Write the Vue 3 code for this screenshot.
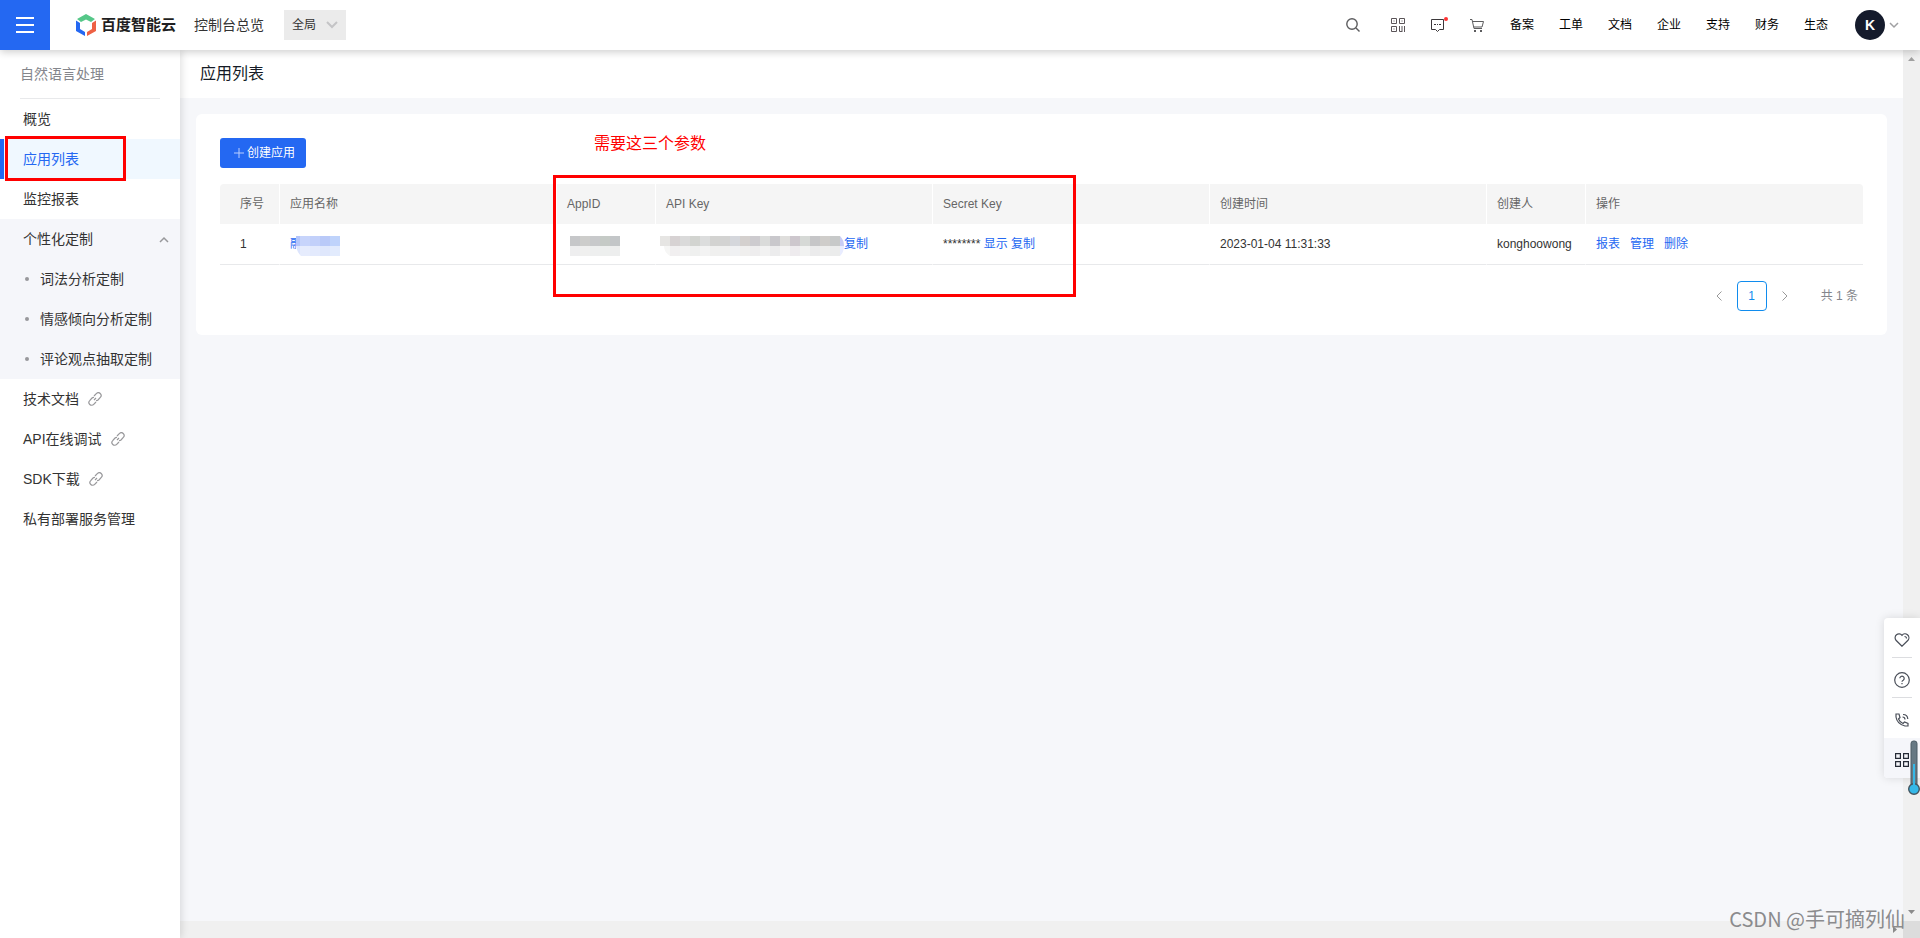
<script setup>
import { ref } from 'vue'

const scope = ref('全局')
const topLinks = ['备案', '工单', '文档', '企业', '支持', '财务', '生态']
const subItems = ['词法分析定制', '情感倾向分析定制', '评论观点抽取定制']
const docItems = ['技术文档', 'API在线调试', 'SDK下载']
const appIdTiles = ['#c6c7c9', '#cdcdcb', '#c8c9cb', '#c5cac6', '#c3c6c8']
const apiKeyTiles = [
  '#e6e5e3', '#d7d2d3', '#dadada', '#d2d4d0', '#dcdddd', '#d3d3d1', '#d3d3d2', '#d5d7dc', '#d4d0ce',
  '#cdcbcf', '#dadbda', '#c9c8cc', '#dfdedc', '#cdc7cd', '#d6d9d6', '#c6c6c8', '#cfcdca', '#c7c9c9',
]
const nameTiles = ['#b4c5fb', '#c7d4fb', '#c2d0fa', '#b9c9f8', '#bfd3fb']
</script>

<template>
  <div class="console">
    <header class="topbar">
      <button class="menu-btn" aria-label="菜单">
        <svg width="18" height="18" viewBox="0 0 18 18"><path d="M0 2h18M0 9h18M0 16h18" stroke="#fff" stroke-width="2" /></svg>
      </button>
      <a class="brand" href="#">
        <svg width="20" height="22" viewBox="0 0 20 22">
          <path d="M10 0 19 5 15 8 10 5.500 5 8 1 5Z" fill="#55c788" />
          <path d="M0 6.500 4 9v6l5 3v4L0 17Z" fill="#2468f2" />
          <path d="M20 6.500 16 9v6l-5 3v4l9-5Z" fill="#ee6144" />
        </svg>
        <span>百度智能云</span>
      </a>
      <a class="overview" href="#">控制台总览</a>
      <div class="scope">
        <select v-model="scope" aria-label="区域"><option>全局</option></select>
        <svg width="12" height="8" viewBox="0 0 12 8"><path d="m1 1 5 5 5-5" fill="none" stroke="#c4c4c6" stroke-width="2" /></svg>
      </div>
      <div class="tools">
        <button class="tool search" aria-label="搜索">
          <svg width="14" height="14" viewBox="0 0 14 14" fill="none" stroke="#5c5c5e" stroke-width="1.400"><circle cx="6" cy="6" r="5.200" /><path d="m10 10 3.500 3.500" /></svg>
        </button>
        <button class="tool grid" aria-label="二维码">
          <svg width="14" height="14" viewBox="0 0 14 14" fill="none" stroke="#5a5458">
            <path d="M.5.5h5v5h-5zM8.500.5h5v5h-5zM.5 8.500h5v5h-5zM8.500 8v5.500H11M11 8v6M13.500 8v6M2.500 3h1M10.500 3h1M2.500 11h1" />
          </svg>
        </button>
        <button class="tool msg" aria-label="消息">
          <svg width="17" height="16" viewBox="0 0 17 16">
            <path d="M.5 2.500h12v10H8.500l-2 2-2-2h-4Z" fill="none" stroke="#3c383b" />
            <path d="M3 7.500h2M6 7.500h1M8 7.500h2" stroke="#3c383b" />
            <circle cx="15" cy="2" r="2" fill="#f33" />
          </svg>
        </button>
        <button class="tool cart" aria-label="购物车">
          <svg width="15" height="13" viewBox="0 0 15 13" fill="none" stroke="#5c5c5e"><path d="M0 .5h2l2 9h8M2.500 2.500h11l-1.500 5.500H3.800" /><path d="M4 12h2M10 12h2" stroke-width="2" /></svg>
        </button>
        <nav class="top-links"><a v-for="t in topLinks" :key="t" href="#">{{ t }}</a></nav>
        <button class="avatar" aria-label="账户">K</button>
        <svg width="10" height="7" viewBox="0 0 10 7"><path d="m1 1 4 4 4-4" fill="none" stroke="#a0a0a2" stroke-width="1.500" /></svg>
      </div>
    </header>

    <div class="body">
      <aside class="sidebar">
        <h2>自然语言处理</h2>
        <nav>
          <a class="item" href="#">概览</a>
          <a class="item active" href="#">应用列表<span class="mark mark-item"></span></a>
          <a class="item" href="#">监控报表</a>
          <div class="group">
            <button class="item group-head">
              个性化定制
              <svg width="10" height="7" viewBox="0 0 10 7"><path d="m1 6 4-4 4 4" fill="none" stroke="#98989b" stroke-width="1.500" /></svg>
            </button>
            <a v-for="s in subItems" :key="s" class="item sub" href="#">{{ s }}</a>
          </div>
          <a v-for="d in docItems" :key="d" class="item" href="#">
            {{ d }}
            <svg class="link-icon" width="14" height="14" viewBox="0 0 14 14" fill="none" stroke="#98989b" stroke-width="1.200">
              <path d="m6 4 2.300-2.400a2.600 2.600 0 0 1 4 3.800L10 8a2.500 2.500 0 0 1-2 .6M8 10l-2.300 2.400a2.600 2.600 0 0 1-4-3.800L4 6a2.500 2.500 0 0 1 2-.6M6 8l2-2" />
            </svg>
          </a>
          <a class="item" href="#">私有部署服务管理</a>
        </nav>
      </aside>

      <div class="viewport">
        <main class="content">
          <h1>应用列表</h1>
          <section class="card">
            <button class="create">
              <svg width="10" height="10" viewBox="0 0 10 10"><path d="M5 0v10M0 5h10" stroke="#b9ceff" stroke-width="1" /></svg>
              创建应用
            </button>
            <table>
              <colgroup>
                <col class="c-index"><col><col class="c-short"><col><col><col><col class="c-short"><col>
              </colgroup>
              <thead>
                <tr>
                  <th>序号</th><th>应用名称</th><th>AppID</th><th>API Key</th><th>Secret Key</th><th>创建时间</th><th>创建人</th><th>操作</th>
                </tr>
              </thead>
              <tbody>
                <tr>
                  <td>1</td>
                  <td>
                    <div class="masked name">
                      <a href="#">融</a>
                      <svg width="44" height="20" viewBox="0 0 44 20">
                        <rect width="44" height="20" fill="#fff" />
                        <g v-for="(c, i) in nameTiles" :key="i" :fill="c">
                          <rect :x="i * 10 - 6" width="10" height="10" />
                          <rect :x="i * 10 - 6" y="10" width="10" height="10" opacity=".45" />
                        </g>
                        <path d="M0 10v10h5q-4-4-5-10" fill="#fff" />
                      </svg>
                    </div>
                  </td>
                  <td>
                    <div class="masked id">
                      <svg width="50" height="20" viewBox="0 0 50 20">
                        <g v-for="(c, i) in appIdTiles" :key="i" :fill="c">
                          <rect :x="i * 10" width="10" height="10" />
                          <rect :x="i * 10" y="10" width="10" height="10" opacity=".3" />
                        </g>
                      </svg>
                    </div>
                  </td>
                  <td>
                    <div class="masked key">
                      <svg width="184" height="20" viewBox="0 0 184 20">
                        <g v-for="(c, i) in apiKeyTiles" :key="i" :fill="c">
                          <rect :x="i * 10" width="10" height="10" />
                          <rect :x="i * 10" y="10" width="10" height="10" opacity=".35" />
                        </g>
                        <path d="M180 0q4 4 4 10h-4Z" fill="#c8ccf5" />
                        <path d="M180 10h4q0 6-4 10Z" fill="#e8ecff" />
                        <path d="M0 10v10h10q-6-4-6-10Z" fill="#fff" />
                      </svg>
                      <a href="#">复制</a>
                    </div>
                  </td>
                  <td>******** <a href="#">显示</a> <a href="#">复制</a></td>
                  <td>2023-01-04 11:31:33</td>
                  <td>konghoowong</td>
                  <td><div class="ops"><a href="#">报表</a><a href="#">管理</a><a href="#">删除</a></div></td>
                </tr>
              </tbody>
            </table>
            <div class="pager">
              <button class="arrow" aria-label="上一页"><svg width="6" height="10" viewBox="0 0 6 10"><path d="M5.500.5 1 5l4.500 4.500" fill="none" stroke="#999" /></svg></button>
              <button class="page">1</button>
              <button class="arrow" aria-label="下一页"><svg width="6" height="10" viewBox="0 0 6 10"><path d="M.5.5 5 5 .5 9.500" fill="none" stroke="#999" /></svg></button>
              <span>共 1 条</span>
            </div>
          </section>
          <p class="note">需要这三个参数</p>
          <span class="mark mark-table"></span>
        </main>
        <div class="vbar">
          <svg width="7" height="4" viewBox="0 0 7 4"><path d="m3.500 0 3.500 4H0Z" fill="#a0a0a0" /></svg>
          <svg width="7" height="4" viewBox="0 0 7 4"><path d="m3.500 4 3.500-4H0Z" fill="#8a8a8a" /></svg>
        </div>
        <div class="hbar"><svg width="4" height="7" viewBox="0 0 4 7"><path d="M0 0v7l4-3.500Z" fill="#8a8a8a" /></svg></div>
        <div class="corner"></div>
      </div>
    </div>

    <div class="dock">
      <button aria-label="收藏"><svg width="16" height="14" viewBox="0 0 16 14" fill="none" stroke="#4a4f59" stroke-width="1.200"><path d="M8 13.200 2 7.300a3.800 3.800 0 0 1 6-5 3.800 3.800 0 0 1 6 5ZM10.500 3.500q2 0 2 2" /></svg></button>
      <button aria-label="帮助"><svg width="16" height="16" viewBox="0 0 16 16" fill="none" stroke="#4a4f59" stroke-width="1.200"><circle cx="8" cy="8" r="7.300" /><path d="M5.800 6.200a2.200 2.200 0 1 1 3.400 2Q8 8.900 8 9.800M8 11v1.300" /></svg></button>
      <button aria-label="电话"><svg width="14" height="14" viewBox="0 0 14 14" fill="none" stroke="#4a4f59" stroke-width="1.200"><path d="M1 1h3l1 3.500L3.500 6Q5 9.500 8 10.500L9.500 9l3.500 1.500V13H10Q2 11 1 4ZM7.500 4Q10 4 10 6.500M8 1.500q4.500 0 4.800 4.500" /></svg></button>
      <button class="on" aria-label="更多"><svg width="14" height="14" viewBox="0 0 14 14" fill="none" stroke="#262b36" stroke-width="1.200"><path d="M.6.6h4.800v4.800H.6zM8.600.6h4.800v4.800H8.600zM.6 8.600h4.800v4.800H.6zM8.600 8.600h4.800v4.800H8.600z" /></svg></button>
      <svg class="thermo" width="12" height="56" viewBox="0 0 12 56">
        <rect x="3" y="1" width="6" height="46" rx="2.500" fill="#667883" stroke="#4a5a64" />
        <circle cx="6" cy="49" r="5.300" fill="#35b8e8" stroke="#44545e" stroke-width="1.400" />
        <path d="M6 24v22" stroke="#35b8e8" stroke-width="2" />
      </svg>
    </div>
    <div class="watermark">CSDN @手可摘列仙</div>
  </div>
</template>

<style>
body { margin: 0; }
</style>

<style scoped>
* { box-sizing: border-box; }
.console {
  position: relative;
  display: flex;
  flex-direction: column;
  min-height: 100vh;
  background: #fff;
  color: #333;
  font: 12px/20px "Liberation Sans", "Noto Sans CJK SC", sans-serif;
}
a { color: inherit; text-decoration: none; }
button { padding: 0; border: 0; background: none; font: inherit; color: inherit; cursor: pointer; }
svg { display: block; flex: none; }

.topbar {
  position: relative;
  z-index: 2;
  display: flex;
  align-items: center;
  height: 50px;
  background: #fff;
  box-shadow: 0 2px 8px rgba(0, 0, 0, .2);
}
.menu-btn { display: grid; place-items: center; width: 50px; height: 50px; background: #2468f2; }
.brand { display: flex; align-items: center; gap: 5px; margin-left: 26px; font-size: 15px; font-weight: 700; color: #1f1f22; }
.overview { margin-left: 18px; font-size: 14px; color: #333; }
.scope { position: relative; display: flex; align-items: center; width: 62px; height: 30px; margin-left: 20px; background: #ebebeb; }
.scope select { width: 100%; height: 30px; padding: 0 8px; border: 0; background: none; appearance: none; font: inherit; color: #333; }
.scope svg { position: absolute; right: 8px; pointer-events: none; }
.tools { display: flex; align-items: center; margin-left: auto; padding-right: 21px; }
.search { margin-right: 31px; }
.grid { margin-right: 26px; }
.msg { margin-right: 22px; }
.cart { margin-right: 25px; }
.top-links { display: flex; gap: 25px; margin-right: 27px; color: #000; }
.avatar { width: 30px; height: 30px; margin-right: 4px; border-radius: 50%; background: #151b2c; color: #fff; font-size: 14px; font-weight: 700; }

.body { display: flex; flex: 1; }
.sidebar { position: relative; z-index: 1; flex: none; width: 180px; background: #fff; box-shadow: 1px 0 8px rgba(0, 0, 0, .14); font-size: 14px; }
.sidebar h2 { margin: 0 20px; padding: 14px 0; border-bottom: 1px solid #e8e9eb; font-size: 14px; font-weight: 400; color: #84868c; }
.item { position: relative; display: flex; align-items: center; width: 100%; height: 40px; padding-left: 23px; text-align: left; }
.active { background: #f0f8ff; color: #2468f2; }
.active::before { content: ""; position: absolute; left: 0; top: 0; width: 4px; height: 40px; background: #2468f2; }
.group { background: #f5f6fa; }
.group-head { justify-content: space-between; padding-right: 11px; }
.sub { padding-left: 25px; gap: 11px; }
.sub::before { content: ""; width: 4px; height: 4px; border-radius: 50%; background: #98989b; }
.link-icon { margin-left: 9px; }

.mark { position: absolute; border: 3px solid #f00; pointer-events: none; }
.mark-item { left: 5px; top: -3px; width: 121px; height: 45px; }
.mark-table { left: 373px; top: 125px; width: 523px; height: 122px; }
.note { position: absolute; left: 414px; top: 82px; margin: 0; font-size: 16px; line-height: 24px; color: #f00; }

.viewport { display: grid; flex: 1; grid-template: 1fr 17px / 1fr 17px; min-width: 0; }
.content { position: relative; background: #f6f7fa; }
.content h1 { margin: 0; padding: 12px 20px; background: #fff; font-size: 16px; font-weight: 400; line-height: 24px; color: #151b26; }
.card { margin: 16px; padding: 24px; border-radius: 6px; background: #fff; }
.create { display: flex; align-items: center; gap: 3px; height: 30px; padding: 0 11px 0 14px; border-radius: 3px; background: #2468f2; color: #fff; }
table { width: 100%; margin-top: 16px; border-spacing: 0; table-layout: fixed; }
.c-index { width: 60px; }
.c-short { width: 99px; }
th, td { height: 40px; padding: 0 10px; border-right: 1px solid #fff; text-align: left; font-weight: 400; white-space: nowrap; }
th { background: #f5f5f5; color: #666; }
td { height: 41px; border-bottom: 1px solid #e8e9eb; }
th:first-child, td:first-child { padding-left: 20px; }
th:last-child, td:last-child { border-right: 0; }
th:first-child { border-top-left-radius: 4px; }
th:last-child { border-top-right-radius: 4px; }
td a { color: #2468f2; }
.masked { display: flex; align-items: center; }
.masked svg { margin-top: 3px; }
.name svg { margin-left: -6px; z-index: 1; }
.id { padding-left: 3px; }
.key { margin-left: -6px; }
.ops { display: flex; gap: 10px; }
.pager { display: flex; align-items: center; justify-content: flex-end; margin-top: 16px; padding-right: 5px; color: #84868c; }
.arrow { display: grid; place-items: center; width: 36px; height: 30px; }
.page { width: 30px; height: 30px; border: 1px solid #108cee; border-radius: 4px; color: #108cee; }
.pager span { margin-left: 18px; }

.vbar { display: flex; flex-direction: column; align-items: center; justify-content: space-between; padding: 7px 0; background: #f0f0f0; }
.hbar { display: flex; align-items: center; justify-content: flex-end; padding-right: 6px; background: #f0f0f0; }
.corner { background: #dcdcdc; }

.dock { position: absolute; right: 0; bottom: 160px; z-index: 3; width: 36px; border-radius: 4px 0 0 4px; background: #fff; box-shadow: 0 0 10px rgba(0, 0, 0, .13); }
.dock button { position: relative; display: grid; place-items: center; width: 36px; height: 40px; padding-top: 4px; }
.dock button:nth-child(-n+2)::after { content: ""; position: absolute; left: 8px; bottom: 0; width: 20px; height: 1px; background: #dcdde0; }
.dock .on { border-radius: 0 0 0 4px; background: #f5f6fa; }
.thermo { position: absolute; right: 0; top: 122px; }
.watermark { position: absolute; right: 15px; bottom: 4px; z-index: 4; font: 20px/30px "Noto Sans CJK SC", sans-serif; color: #8b8b8d; }
</style>
